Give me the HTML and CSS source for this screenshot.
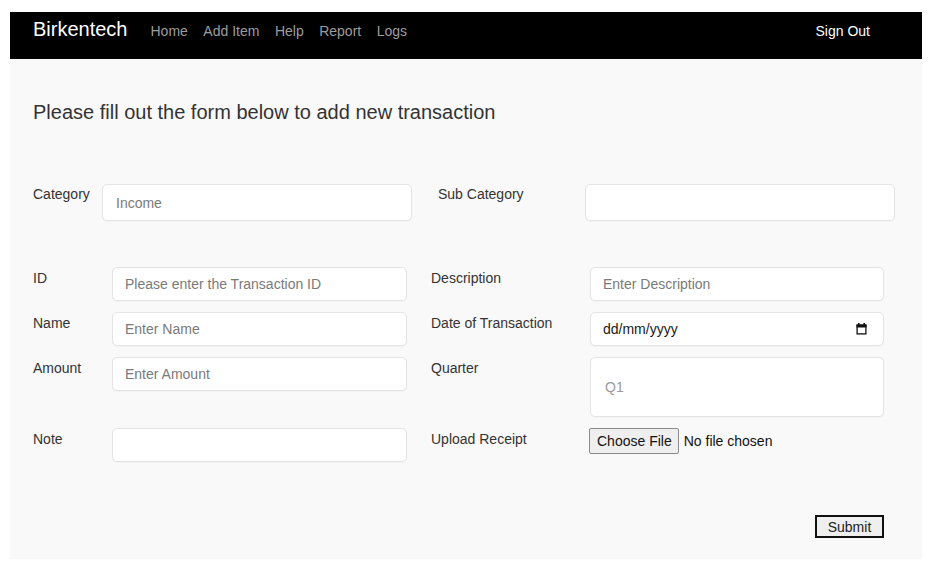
FILE: index.html
```html
<!DOCTYPE html>
<html lang="en">
<head>
<meta charset="utf-8">
<title>Birkentech - Add Transaction</title>
<link rel="stylesheet" href="styles.css">
</head>
<body>
<div class="app">
  <nav class="navbar">
    <a class="brand" href="#">Birkentech</a>
    <ul class="nav-links">
      <li><a href="#">Home</a></li>
      <li><a href="#">Add Item</a></li>
      <li><a href="#">Help</a></li>
      <li><a href="#">Report</a></li>
      <li><a href="#">Logs</a></li>
    </ul>
    <a class="signout" href="#">Sign Out</a>
  </nav>
  <main class="content">
    <h1 class="title">Please fill out the form below to add new transaction</h1>
    <form class="form">
      <div class="grid grid-top">
        <label class="label">Category</label>
        <input class="control control-lg" type="text" placeholder="Income">
        <label class="label label-right-top">Sub Category</label>
        <input class="control control-lg" type="text">
      </div>
      <div class="grid grid-main">
        <label class="label">ID</label>
        <input class="control" type="text" placeholder="Please enter the Transaction ID">
        <label class="label label-right">Description</label>
        <input class="control" type="text" placeholder="Enter Description">

        <label class="label">Name</label>
        <input class="control" type="text" placeholder="Enter Name">
        <label class="label label-right">Date of Transaction</label>
        <div class="control date-field">
          <span class="date-text">dd/mm/yyyy</span>
          <svg class="cal-icon" width="11" height="12" viewBox="0 0 11 12" aria-hidden="true">
            <rect x="2" y="0" width="1.6" height="2.5" fill="#111"/>
            <rect x="7.4" y="0" width="1.6" height="2.5" fill="#111"/>
            <rect x="0.5" y="1.5" width="10" height="3" fill="#111"/>
            <rect x="1.1" y="2.1" width="8.8" height="8.8" fill="none" stroke="#111" stroke-width="1.3"/>
          </svg>
        </div>

        <label class="label">Amount</label>
        <input class="control" type="text" placeholder="Enter Amount">
        <label class="label label-right">Quarter</label>
        <input class="control control-tall" type="text" placeholder="Q1">

        <label class="label">Note</label>
        <input class="control" type="text">
        <label class="label label-right">Upload Receipt</label>
        <div class="file-field">
          <button type="button" class="file-btn">Choose File</button>
          <span class="file-name">No file chosen</span>
        </div>
      </div>
      <div class="actions">
        <button type="submit" class="submit">Submit</button>
      </div>
    </form>
  </main>
</div>
</body>
</html>
```

FILE: styles.css
```css
* { box-sizing: border-box; }

html, body {
  margin: 0;
  padding: 0;
  background: #ffffff;
}

body {
  font-family: "Liberation Sans", Arial, sans-serif;
  font-size: 14px;
  color: #333333;
  padding: 12px 10px 0 10px;
}

.app {
  width: 912px;
}

.navbar {
  height: 47px;
  background: #000000;
  display: flex;
  align-items: baseline;
  padding: 7px 52px 0 23px;
}

.brand {
  color: #ffffff;
  text-decoration: none;
  font-size: 20px;
  line-height: 20px;
  margin-right: 23px;
}

.nav-links {
  list-style: none;
  margin: 0;
  padding: 0;
  display: flex;
  gap: 15.5px;
  flex: 1;
}

.nav-links a {
  color: #9d9d9d;
  text-decoration: none;
  font-size: 14px;
  line-height: 20px;
}

.signout {
  color: #ffffff;
  text-decoration: none;
  font-size: 14px;
  line-height: 20px;
}

.content {
  background: #f9f9f9;
  padding: 41px 38px 21px 23px;
}

.title {
  margin: 0;
  font-size: 20px;
  line-height: 24px;
  font-weight: normal;
  color: #333333;
}

.form {
  margin: 0;
}

.grid {
  display: grid;
  align-items: start;
}

.grid-top {
  margin-top: 60px;
  grid-template-columns: 69px 310px 173px 310px;
}

.grid-main {
  margin-top: 46px;
  grid-template-columns: 79px 295px 183px 294px;
  row-gap: 11px;
}

.label {
  font-size: 14px;
  line-height: 16px;
  padding-top: 3px;
  color: #333333;
}

.grid-top .label {
  padding-top: 2px;
}

.label-right-top {
  padding-left: 26px;
}

.label-right {
  padding-left: 24px;
}

.control {
  display: block;
  width: 100%;
  height: 34px;
  margin: 0;
  padding: 0 12px;
  border: 1px solid #e4e4e4;
  border-radius: 5px;
  background: #ffffff;
  font-family: "Liberation Sans", Arial, sans-serif;
  font-size: 14px;
  color: #333333;
  box-shadow: 0 1px 1px rgba(0, 0, 0, 0.03);
  outline: none;
}

.control::placeholder {
  color: #7a7a7a;
}

.control-lg {
  height: 37px;
  padding-left: 13px;
}

.control-tall {
  height: 60px;
  padding-left: 14px;
}

.control-tall::placeholder {
  color: #9a9a9a;
}

.date-field {
  display: flex;
  align-items: center;
  justify-content: space-between;
  padding: 0 16px 0 12px;
}

.date-text {
  color: #1a1a1a;
}

.cal-icon {
  display: block;
}

.file-field {
  display: flex;
  align-items: center;
  gap: 5px;
  margin-left: -1px;
}

.file-btn {
  height: 26px;
  padding: 0 6px 0 7px;
  background: #efefef;
  border: 1px solid #8a8a8a;
  border-radius: 2px;
  font-family: "Liberation Sans", Arial, sans-serif;
  font-size: 14px;
  color: #111111;
}

.file-name {
  color: #111111;
  font-size: 14px;
}

.actions {
  margin-top: 53px;
  display: flex;
  justify-content: flex-end;
}

.submit {
  width: 69px;
  height: 23px;
  padding: 0;
  background: #efefef;
  border: 2px solid #111111;
  border-radius: 0;
  font-family: "Liberation Sans", Arial, sans-serif;
  font-size: 14px;
  color: #222222;
}
```
